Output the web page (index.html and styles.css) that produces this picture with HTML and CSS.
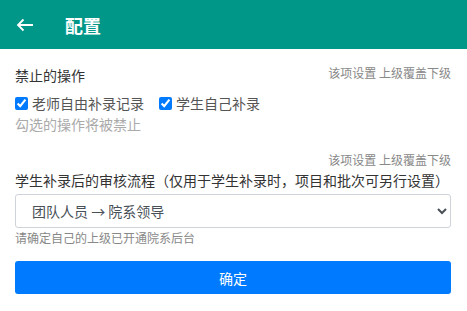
FILE: index.html
```html
<!DOCTYPE html>
<html lang="zh-CN">
<head>
    <meta charset="UTF-8">
    <meta name="viewport" content="width=device-width, initial-scale=1.0">
    <title>配置</title>
    <link rel="stylesheet" href="styles.css">
</head>
<body>
    <header>
        <span class="back">
            <svg width="18" height="14" viewBox="0 0 18 14"><path d="M17 7H2M7.5 1.5L2 7l5.5 5.5" fill="none" stroke="#fff" stroke-width="1.8"/></svg>
        </span>
        <span class="title">配置</span>
    </header>

    <div class="container">
        <div class="field">
            <div class="hint-right">该项设置 上级覆盖下级</div>
            <div class="label">禁止的操作</div>
            <div class="checks">
                <label class="check"><input type="checkbox" checked> 老师自由补录记录</label>
                <label class="check"><input type="checkbox" checked> 学生自己补录</label>
            </div>
            <div class="help">勾选的操作将被禁止</div>
        </div>

        <div class="field second">
            <div class="hint-right">该项设置 上级覆盖下级</div>
            <div class="label">学生补录后的审核流程（仅用于学生补录时，项目和批次可另行设置）</div>
            <select class="select">
                <option>团队人员 → 院系领导</option>
            </select>
            <div class="small">请确定自己的上级已开通院系后台</div>
        </div>

        <button class="submit">确定</button>
    </div>
</body>
</html>
```

FILE: styles.css
```css
body {
    font-family: "Noto Sans CJK SC", "Noto Sans", sans-serif;
    color: #333;
    margin: 0;
    padding: 0;
    background: #fff;
}

header {
    background-color: #009688;
    height: 49px;
    display: flex;
    align-items: center;
    color: white;
}

.back {
    width: 65px;
    display: flex;
    justify-content: flex-start;
    padding-left: 16px;
    box-sizing: border-box;
}

.back svg {
    display: block;
}

.title {
    font-size: 18px;
    font-weight: bold;
}

.container {
    padding: 0 16px 0 15px;
}

.field {
    margin-top: 15px;
}

.field.second {
    margin-top: 17px;
}

.hint-right {
    text-align: right;
    font-size: 12px;
    color: #888;
    line-height: 18px;
    height: 0;
    position: relative;
    top: 0;
}

.field.second .hint-right {
    height: auto;
}

.label {
    font-size: 14px;
    line-height: 20px;
    padding-top: 1px;
}

.checks {
    display: flex;
    gap: 15px;
    margin-top: 8px;
}

.check {
    display: flex;
    align-items: center;
    font-size: 14px;
    line-height: 20px;
    color: #555;
}

.check input {
    width: 13px;
    height: 13px;
    margin: 0 4px 0 0;
    accent-color: #007bff;
}

.help {
    font-size: 14px;
    color: #aaa;
    line-height: 20px;
    margin-top: 1px;
}

.select {
    display: block;
    width: 100%;
    height: 34px;
    margin-top: 4px;
    padding: 0 12px;
    font-family: inherit;
    font-size: 14px;
    color: #495057;
    background: #fff;
    border: 1px solid #ced4da;
    border-radius: 3px;
}

.small {
    font-size: 12px;
    color: #888;
    line-height: 18px;
    margin-top: 1px;
}

.submit {
    display: block;
    width: 100%;
    height: 33px;
    margin-top: 14px;
    background-color: #007bff;
    color: white;
    border: none;
    border-radius: 3px;
    font-family: inherit;
    font-size: 14px;
}
```
